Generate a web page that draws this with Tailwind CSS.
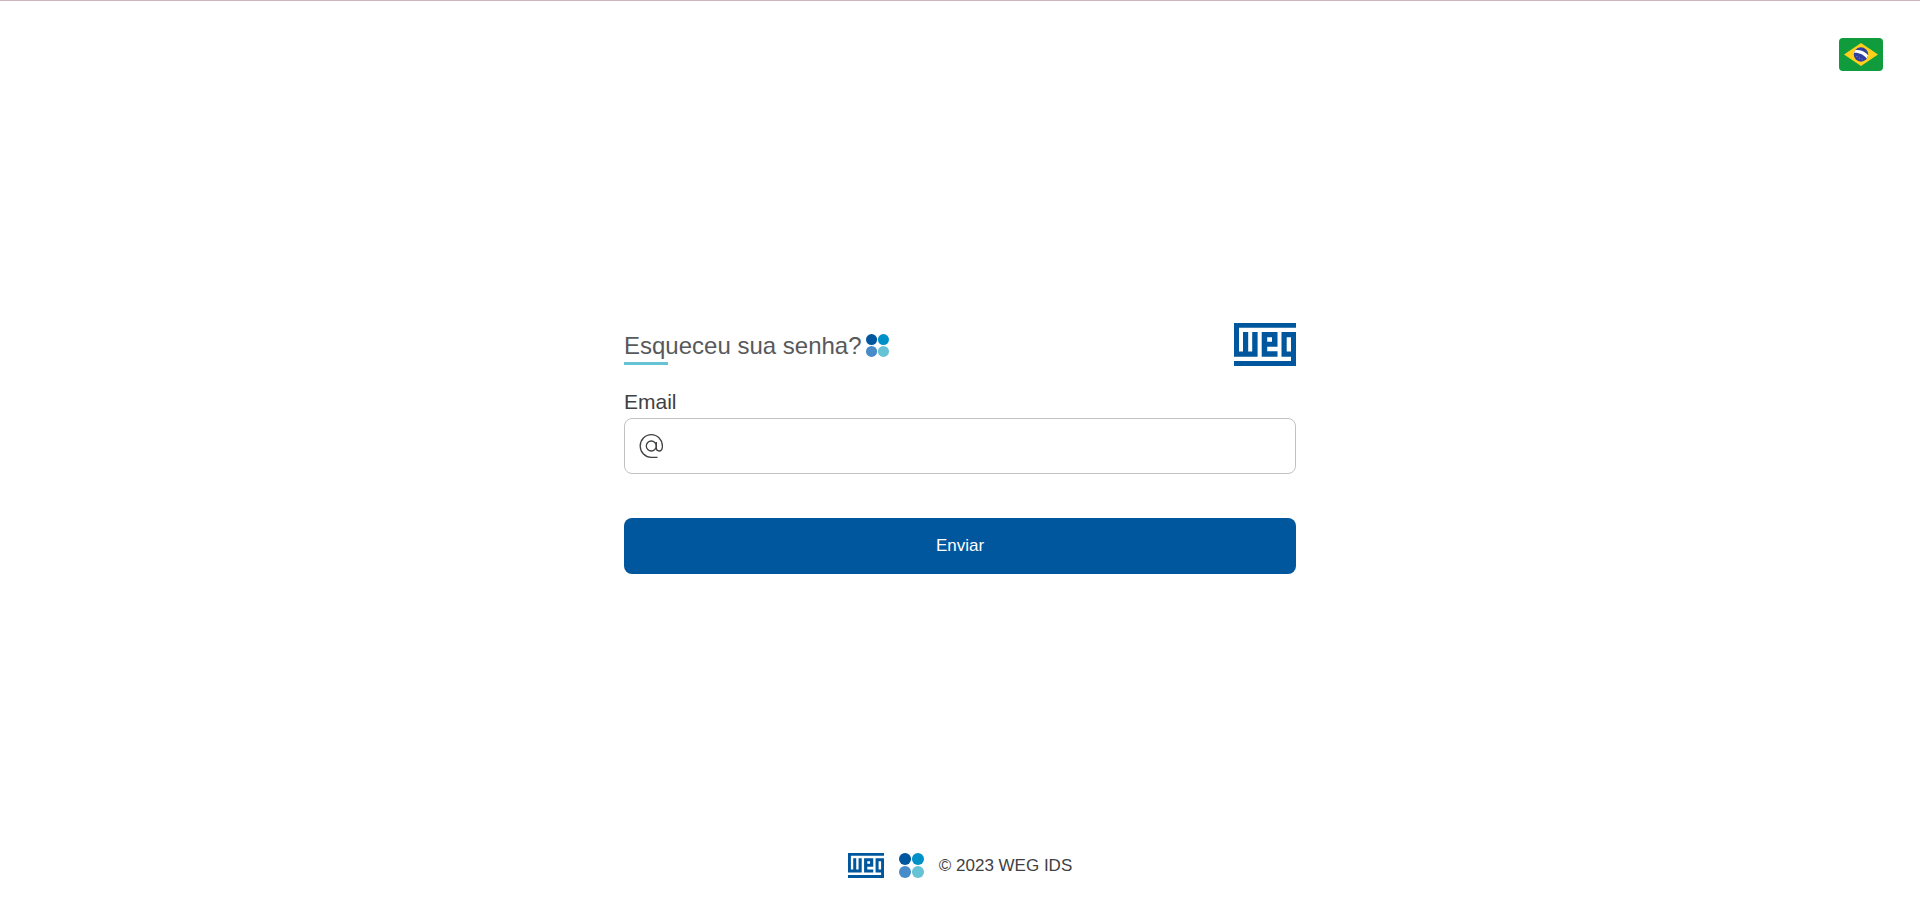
<!DOCTYPE html>
<html lang="pt-BR">
<head>
<meta charset="utf-8">
<meta name="viewport" content="width=device-width, initial-scale=1">
<title>WEG IDS</title>
<script src="https://cdn.jsdelivr.net/npm/@tailwindcss/browser@4"></script>
</head>
<body class="flex min-h-screen flex-col border-t border-[#cdb4bf] bg-white font-['Liberation_Sans',Arial,sans-serif] text-[#3f4142]">
<svg class="hidden" aria-hidden="true">
  <symbol id="weg" viewBox="0 0 62 43" preserveAspectRatio="none">
    <g fill="#00579d">
      <path d="M0 0H62V4.700H5V28.500H9V9H14.200V28.500H18.200V9H23.600V33.700H0Z"/>
      <path fill-rule="evenodd" d="M27.700 9H43.500V23.700H33.200V28.300H43.500V33.700H27.700ZM33.200 14.200V18.700H38V14.200Z"/>
      <path fill-rule="evenodd" d="M47.500 9H62V43H0V38H57V33.700H47.500ZM52.700 14.200V28.500H57V14.200Z"/>
    </g>
  </symbol>
  <symbol id="dots" viewBox="0 0 24 24">
    <circle cx="5.800" cy="5.800" r="5.800" fill="#00579d"/>
    <circle cx="18.200" cy="5.800" r="5.800" fill="#0090c8"/>
    <circle cx="5.800" cy="18.200" r="5.800" fill="#488bc9"/>
    <circle cx="18.200" cy="18.200" r="5.800" fill="#66c3d5"/>
  </symbol>
</svg>
<header class="flex justify-end px-9 pt-9">
  <button type="button" aria-label="Português (Brasil)" class="mr-px mt-px block">
    <svg class="block h-[33px] w-11" viewBox="0 0 44 33">
      <rect width="44" height="33" rx="4" fill="#109b3c"/>
      <path d="M22 5 39 16.500 22 28 5 16.500Z" fill="#fed01b"/>
      <circle cx="22" cy="16.500" r="7.200" fill="#303f9f"/>
      <path d="M15 14.800C20 14.400 25 16.600 27.800 20.600L29.200 17.200C26 13.600 20.800 11.600 16.200 12.200Z" fill="#fff"/>
      <g fill="#8f9bd8"><circle cx="18" cy="18.500" r=".5"/><circle cx="20.500" cy="20" r=".5"/><circle cx="23" cy="21" r=".5"/></g>
    </svg>
  </button>
</header>
<main class="flex flex-1 items-center justify-center px-4 pb-7">
  <form class="w-full max-w-[672px]">
    <div class="flex h-[43px] items-center justify-between">
      <div class="mt-1.5">
        <h1 class="flex items-center gap-1 text-2xl leading-8 text-[#58595b]">Esqueceu sua senha?<svg class="size-[23px]" aria-hidden="true"><use href="#dots"/></svg></h1>
        <div class="h-[3px] w-11 bg-[#66c3d5]"></div>
      </div>
      <svg class="h-[43px] w-[62px]" role="img" aria-label="WEG"><use href="#weg"/></svg>
    </div>
    <label for="email" class="mb-1 mt-6 block text-[21px] leading-6">Email</label>
    <div class="flex h-14 items-center rounded-lg border border-[#c1c1c1] px-3.5">
      <svg class="size-6 shrink-0" viewBox="0 0 24 24" fill="none" stroke="#3f4142" stroke-width="1.300" aria-hidden="true">
        <circle cx="12.300" cy="12" r="5"/>
        <path d="M17.300 8V13.800C17.300 15.800 18.400 17 20.200 17C22.400 17 23.400 14.800 23.400 12A11.100 11.300 0 1 0 12.300 23.300H18.500"/>
      </svg>
      <input id="email" type="email" name="email" class="ml-3 h-full min-w-0 flex-1 bg-transparent text-lg outline-none">
    </div>
    <button type="submit" class="mt-11 h-14 w-full rounded-lg bg-[#00579d] text-[17px] text-white">Enviar</button>
  </form>
</main>
<footer class="flex items-center justify-center pb-[42px]">
  <svg class="h-[25px] w-9" role="img" aria-label="WEG"><use href="#weg"/></svg>
  <svg class="ml-[15px] size-[25px]" aria-hidden="true"><use href="#dots"/></svg>
  <p class="ml-[15px] text-[17px] leading-6">© 2023 WEG IDS</p>
</footer>
</body>
</html>
